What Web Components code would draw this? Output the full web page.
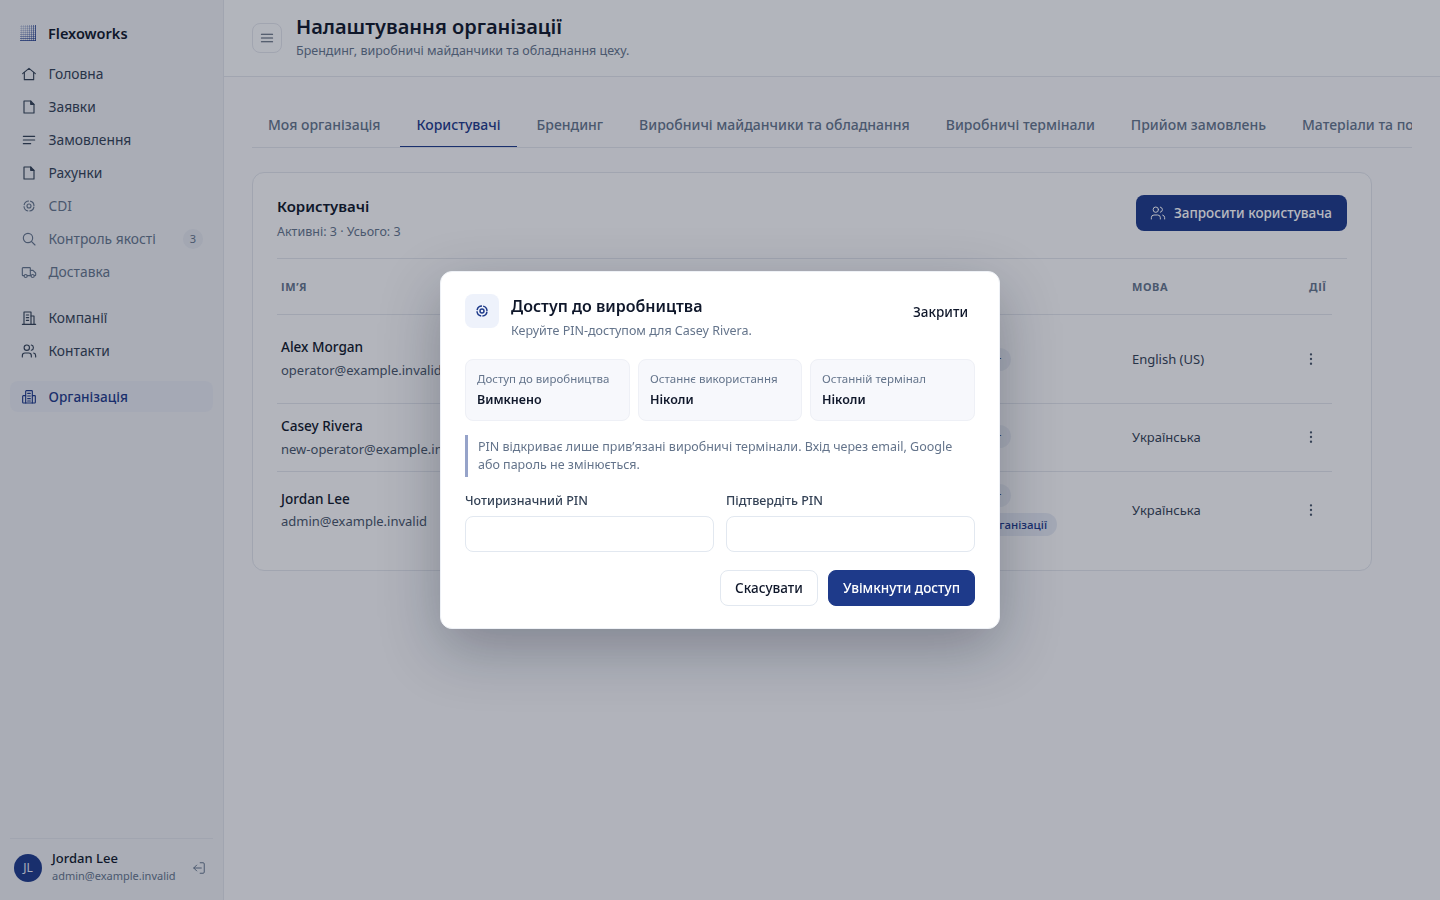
<!DOCTYPE html>
<html lang="uk">
<head>
<meta charset="utf-8">
<title>Налаштування організації</title>
<style>
  html, body { margin: 0; height: 100%; }
  body { font-family: "Noto Sans", "Liberation Sans", sans-serif; color: #0f172a; background: #f6f7fa; overflow: hidden; }
</style>
</head>
<body>
<app-shell>
  <app-sidebar slot="sidebar">
    <nav-item icon="house" tone="strong">Головна</nav-item>
    <nav-item icon="file" tone="strong">Заявки</nav-item>
    <nav-item icon="lines" tone="strong">Замовлення</nav-item>
    <nav-item icon="file" tone="strong">Рахунки</nav-item>
    <nav-item icon="target">CDI</nav-item>
    <nav-item icon="search" badge="3">Контроль якості</nav-item>
    <nav-item icon="truck">Доставка</nav-item>
    <nav-item icon="building" tone="strong" group>Компанії</nav-item>
    <nav-item icon="users" tone="strong">Контакти</nav-item>
    <nav-item icon="org" active group>Організація</nav-item>
  </app-sidebar>

  <page-header title="Налаштування організації" subtitle="Брендинг, виробничі майданчики та обладнання цеху."></page-header>

  <org-tabs>
    <tab-item>Моя організація</tab-item>
    <tab-item active>Користувачі</tab-item>
    <tab-item>Брендинг</tab-item>
    <tab-item>Виробничі майданчики та обладнання</tab-item>
    <tab-item>Виробничі термінали</tab-item>
    <tab-item>Прийом замовлень</tab-item>
    <tab-item>Матеріали та по</tab-item>
  </org-tabs>

  <users-card>
    <user-row name="Alex Morgan" email="operator@example.invalid" lang="English (US)" height="89" style="--id-lift: 2px"></user-row>
    <user-row name="Casey Rivera" email="new-operator@example.invalid" lang="Українська" height="68" style="--cell-lift: 2px"></user-row>
    <user-row name="Jordan Lee" email="admin@example.invalid" lang="Українська" height="77" style="--cell-lift: 2px; --id-lift: 2px; --mail-gap: 0px" owner last></user-row>
  </users-card>
</app-shell>

<pin-dialog>
  <stat-tile label="Доступ до виробництва">Вимкнено</stat-tile>
  <stat-tile label="Останнє використання">Ніколи</stat-tile>
  <stat-tile label="Останній термінал">Ніколи</stat-tile>
</pin-dialog>

<script>
const ICONS = {
  house: '<path d="M2.500 11.500 12 3.500l9.500 8"/><path d="M5 9.500V20.500h14V9.500"/>',
  file: '<path d="M4.500 3h10l5 5v13h-15z"/><path d="M14.500 3v5h5" /><path d="M15.500 4.500v2.500h2.500" />',
  lines: '<path d="M3.500 6.500h17"/><path d="M3.500 12h17"/><path d="M3.500 17.500h11"/>',
  target: '<circle cx="12" cy="12" r="7.500" stroke-linecap="butt" stroke-dasharray="9.980 1.800" stroke-dashoffset="-0.900"/><circle cx="12" cy="12" r="3"/>',
  search: '<circle cx="10.500" cy="10.500" r="7"/><path d="m21 21-5.500-5.500"/>',
  truck: '<path d="M14 17.500V6.500a1 1 0 0 0-1-1H3a1 1 0 0 0-1 1v10a1 1 0 0 0 1 1h1.500"/><path d="M9.500 17.500H14"/><path d="M14 9.500h4l4 4v3a1 1 0 0 1-1 1h-1"/><circle cx="7" cy="18" r="2.300"/><circle cx="17.500" cy="18" r="2.300"/>',
  building: '<path d="M2 21.500h20"/><path d="M4.500 21.500V3h10.500v18.500"/><path d="M15 9h4.500v12.500"/><path d="M8 7.500h3.500M8 11.500h3.500M8 15.500h3.500"/>',
  users: '<path d="M15.500 21v-2a4 4 0 0 0-4-4h-5.500a4 4 0 0 0-4 4v2"/><circle cx="8.700" cy="7" r="4"/><path d="M22 21v-2a4 4 0 0 0-3-3.900"/><path d="M15.500 3.100a4 4 0 0 1 0 7.800"/>',
  org: '<path d="M7 21V3.500a1 1 0 0 1 1-1h8a1 1 0 0 1 1 1V21"/><path d="M7 10H3.500a1 1 0 0 0-1 1v9a1 1 0 0 0 1 1h17a1 1 0 0 0 1-1v-9a1 1 0 0 0-1-1H17"/><path d="M10 6.500h4M10 10.500h4M10 14.500h4M10 18h4"/>',
  menu: '<path d="M4.500 7h15"/><path d="M4.500 12h15"/><path d="M4.500 17h15"/>',
  kebab: '<circle cx="12" cy="5" r=".9"/><circle cx="12" cy="12" r=".9"/><circle cx="12" cy="19" r=".9"/>',
  logout: '<path d="M14 3h5a2 2 0 0 1 2 2v14a2 2 0 0 1-2 2h-5"/><path d="M16 12H3"/><path d="m8 7-5 5 5 5"/>'
};

function icon(name, size, width) {
  return `<svg width="${size}" height="${size}" viewBox="0 0 24 24" fill="none" stroke="currentColor" stroke-width="${width || 1.7}" stroke-linecap="round" stroke-linejoin="round" aria-hidden="true">${ICONS[name]}</svg>`;
}

// plaid mark: 1px stripes that get darker towards the right and the bottom
function logoStripes() {
  let out = '';
  for (let i = 0; i < 8; i++) {
    const a = (0.14 + 0.62 * Math.pow(i / 7, 2.2)).toFixed(2);
    out += `<rect x="${i * 2 + 1}" y="0" width="1" height="16" fill="#1e3a8a" opacity="${a}"/>`;
    out += `<rect x="0" y="${i * 2 + 1}" width="16" height="1" fill="#1e3a8a" opacity="${a}"/>`;
  }
  return out;
}

class AppShell extends HTMLElement {
  constructor() {
    super();
    this.attachShadow({ mode: 'open' });
    this.shadowRoot.innerHTML = `
      <style>
        :host { display: grid; grid-template-columns: 224px 1fr; height: 100vh; }
        main { min-width: 0; display: flex; flex-direction: column; }
        .content { padding: 24px 28px; display: flex; flex-direction: column; gap: 24px; min-width: 0; }
      </style>
      <slot name="sidebar"></slot>
      <main>
        <slot name="header"></slot>
        <div class="content"><slot></slot></div>
      </main>
    `;
  }
  connectedCallback() {
    const header = this.querySelector('page-header');
    if (header) header.slot = 'header';
  }
}

class AppSidebar extends HTMLElement {
  constructor() {
    super();
    this.attachShadow({ mode: 'open' });
    this.shadowRoot.innerHTML = `
      <style>
        :host { display: flex; flex-direction: column; box-sizing: border-box; height: 100vh; background: #eceef3; border-right: 1px solid #e0e3ea; padding: 0 10px; }
        .brand { display: flex; align-items: center; gap: 12px; height: 33px; margin: 16px 0 9px; padding-left: 10px; font-size: 14.500px; font-weight: 600; color: #0f172a; }
        .brand svg { display: block; }
        nav { display: flex; flex-direction: column; gap: 2px; flex: 1; }
        .user { display: flex; align-items: center; box-sizing: border-box; border-top: 1px solid #e0e3ea; height: 62px; padding: 0 0 4px 4px; }
        .avatar { width: 28px; height: 28px; border-radius: 50%; background: #1e3a8a; color: #e8ecf6; font-size: 12px; display: flex; align-items: center; justify-content: center; flex: none; }
        .who { margin: 0 0 2px 10px; flex: 1; min-width: 0; }
        .name { font-size: 13px; font-weight: 500; line-height: 18px; color: #0f172a; }
        .mail { font-size: 11px; line-height: 18px; color: #64748b; }
        .out { color: #64748b; margin-right: 7px; display: flex; }
      </style>
      <div class="brand"><svg width="16" height="16" viewBox="0 0 16 16" aria-hidden="true">${logoStripes()}</svg>Flexoworks</div>
      <nav><slot></slot></nav>
      <div class="user">
        <div class="avatar">JL</div>
        <div class="who"><div class="name">Jordan Lee</div><div class="mail">admin@example.invalid</div></div>
        <span class="out">${icon('logout', 14)}</span>
      </div>
    `;
  }
}

class NavItem extends HTMLElement {
  constructor() {
    super();
    this.attachShadow({ mode: 'open' });
  }
  connectedCallback() {
    const badge = this.getAttribute('badge');
    this.shadowRoot.innerHTML = `
      <style>
        :host { display: flex; align-items: center; height: 31px; padding: 0 10px 0 11px; border-radius: 8px; font-size: 13.800px; color: #64748b; }
        :host([tone="strong"]) { color: #334155; }
        :host([active]) { color: #1e3a8a; background: #e6e9f1; font-size: 13.600px; font-weight: 500; }
        :host([group]) { margin-top: 13px; }
        .ic { width: 16px; height: 16px; margin-right: 11.500px; flex: none; display: flex; }
        .label { flex: 1; white-space: nowrap; }
        .badge { width: 20px; height: 20px; border-radius: 50%; background: #e2e5ec; color: #64748b; font-size: 11px; display: flex; align-items: center; justify-content: center; }
      </style>
      <span class="ic">${icon(this.getAttribute('icon'), 16)}</span>
      <span class="label"><slot></slot></span>
      ${badge ? `<span class="badge">${badge}</span>` : ''}
    `;
  }
}

class PageHeader extends HTMLElement {
  constructor() {
    super();
    this.attachShadow({ mode: 'open' });
  }
  connectedCallback() {
    this.shadowRoot.innerHTML = `
      <style>
        :host { display: flex; align-items: center; gap: 14px; box-sizing: border-box; height: 77px; padding: 0 28px; border-bottom: 1px solid #e0e3ea; background: #f8f9fb; }
        button { width: 30px; height: 30px; padding: 0; border: 1px solid #e0e3ea; border-radius: 8px; background: #f8f9fb; color: #475569; display: flex; align-items: center; justify-content: center; }
        .text { padding-bottom: 4px; }
        h1 { margin: 0; font-size: 20px; line-height: 28px; font-weight: 600; color: #0f172a; }
        p { margin: 1px 0 0; font-size: 12.500px; line-height: 18px; color: #64748b; }
      </style>
      <button type="button" aria-label="Меню">${icon('menu', 18, 1.400)}</button>
      <div class="text"><h1>${this.getAttribute('title')}</h1><p>${this.getAttribute('subtitle')}</p></div>
    `;
  }
}

class OrgTabs extends HTMLElement {
  constructor() {
    super();
    this.attachShadow({ mode: 'open' });
    this.shadowRoot.innerHTML = `
      <style>
        :host { display: flex; gap: 4px; height: 46px; border-bottom: 1px solid #e0e3ea; overflow: hidden; }
      </style>
      <slot></slot>
    `;
  }
}

class TabItem extends HTMLElement {
  constructor() {
    super();
    this.attachShadow({ mode: 'open' });
    this.shadowRoot.innerHTML = `
      <style>
        :host { display: flex; align-items: center; flex: none; box-sizing: border-box; height: 46px; padding: 2px 16px 0; border-bottom: 1px solid transparent; font-size: 14px; font-weight: 500; color: #64748b; white-space: nowrap; }
        :host([active]) { color: #1e3a8a; border-bottom-color: #1e3a8a; }
      </style>
      <slot></slot>
    `;
  }
}

class UsersCard extends HTMLElement {
  constructor() {
    super();
    this.attachShadow({ mode: 'open' });
    this.shadowRoot.innerHTML = `
      <style>
        :host { display: block; box-sizing: border-box; width: 1120px; padding: 22px 24px 21px; background: #f9f9fb; border: 1px solid #e0e3ea; border-radius: 12px; }
        .top { display: flex; justify-content: space-between; align-items: flex-start; height: 63px; border-bottom: 1px solid #e0e3ea; }
        h2 { margin: 0; font-size: 15px; line-height: 22px; font-weight: 600; color: #0f172a; }
        p { margin: 5px 0 0; font-size: 12.500px; line-height: 20px; color: #64748b; }
        button { display: flex; align-items: center; gap: 8px; height: 36px; padding: 0 15px 0 14px; border: 0; border-radius: 8px; background: #1e3a8a; color: #fff; font: 500 13.500px "Noto Sans", sans-serif; }
        .table { width: 1055px; }
        .head { display: grid; grid-template-columns: 600px 251px 177px 27px; align-items: center; height: 55px; border-bottom: 1px solid #e0e3ea; font-size: 11px; font-weight: 700; letter-spacing: .6px; color: #64748b; text-transform: uppercase; }
        .head span { padding-left: 4px; white-space: nowrap; }
      </style>
      <div class="top">
        <div><h2>Користувачі</h2><p>Активні: 3 · Усього: 3</p></div>
        <button type="button">${icon('users', 16, 1.500)}Запросити користувача</button>
      </div>
      <div class="table">
        <div class="head"><span>Ім’я</span><span></span><span>Мова</span><span>Дії</span></div>
        <slot></slot>
      </div>
    `;
  }
}

class UserRow extends HTMLElement {
  constructor() {
    super();
    this.attachShadow({ mode: 'open' });
  }
  connectedCallback() {
    const owner = this.hasAttribute('owner');
    this.shadowRoot.innerHTML = `
      <style>
        :host { display: grid; grid-template-columns: 600px 251px 177px 27px; align-items: center; box-sizing: border-box; height: ${this.getAttribute('height')}px; border-bottom: 1px solid #e0e3ea; }
        :host([last]) { border-bottom: 0; }
        .cell { padding-left: 4px; min-width: 0; }
        .id { margin-bottom: var(--id-lift, 0px); }
        .name { font-size: 13.600px; line-height: 22px; font-weight: 500; color: #0f172a; margin-bottom: var(--mail-gap, 1px); }
        .mail { font-size: 13px; line-height: 22px; color: #475569; }
        .roles { display: flex; flex-direction: column; align-items: flex-start; gap: 6px; margin-bottom: var(--cell-lift, 0px); }
        .pill { box-sizing: border-box; height: 23px; line-height: 23px; border-radius: 12px; background: #e8ebf2; font-size: 11px; font-weight: 500; color: #334155; text-align: right; padding-right: 10px; white-space: nowrap; overflow: hidden; }
        .pill.a { width: 130px; }
        .pill.b { width: 176px; font-size: 11.500px; color: #1e3a8a; background: #e4e8f2; }
        .lang { font-size: 13px; color: #334155; margin-bottom: var(--cell-lift, 0px); }
        .more { display: flex; margin-left: -2px; margin-bottom: var(--cell-lift, 0px); padding: 0; color: #475569; }
      </style>
      <div class="cell id"><div class="name">${this.getAttribute('name')}</div><div class="mail">${this.getAttribute('email')}</div></div>
      <div class="cell roles"><span class="pill a">Менеджмент</span>${owner ? '<span class="pill b">Власник організації</span>' : ''}</div>
      <div class="cell lang">${this.getAttribute('lang')}</div>
      <div class="cell more">${icon('kebab', 16)}</div>
    `;
  }
}

class StatTile extends HTMLElement {
  constructor() {
    super();
    this.attachShadow({ mode: 'open' });
  }
  connectedCallback() {
    this.shadowRoot.innerHTML = `
      <style>
        :host { display: block; box-sizing: border-box; height: 62px; padding: 10px 11px; background: #f7f8fc; border: 1px solid #eef0f6; border-radius: 8px; }
        .label { font-size: 11.500px; line-height: 18px; color: #64748b; white-space: nowrap; }
        .value { font-size: 12.500px; line-height: 20px; margin-top: 2px; font-weight: 600; color: #0f172a; }
      </style>
      <div class="label">${this.getAttribute('label')}</div>
      <div class="value"><slot></slot></div>
    `;
  }
}

class PinDialog extends HTMLElement {
  constructor() {
    super();
    this.attachShadow({ mode: 'open' });
    this.shadowRoot.innerHTML = `
      <style>
        :host { position: fixed; inset: 0; display: flex; align-items: center; justify-content: center; background: rgba(15, 23, 42, .3); }
        .box { box-sizing: border-box; width: 560px; height: 358px; padding: 22px 24px 21px; background: #fff; border: 1px solid #eef1f6; border-radius: 12px; box-shadow: 0 20px 60px rgba(15, 23, 42, .3); }
        .head { display: flex; align-items: flex-start; height: 65px; }
        .badge { width: 34px; height: 34px; border-radius: 8px; background: #eef2fb; color: #1e3a8a; display: flex; align-items: center; justify-content: center; flex: none; margin-right: 12px; }
        .titles { flex: 1; }
        h2 { margin: 0; font-size: 16px; line-height: 24px; font-weight: 600; color: #0f172a; }
        .sub { margin: 4px 0 0; font-size: 12.500px; line-height: 18px; color: #64748b; }
        .close { border: 0; background: none; height: 36px; padding: 0 7px; font: 500 13.500px "Noto Sans", sans-serif; color: #0f172a; }
        .tiles { display: grid; grid-template-columns: 165px 164px 165px; gap: 8px; }
        .note { margin-top: 14px; border-left: 3px solid #96a3c9; padding: 3px 16px 3px 10px; font-size: 12.500px; line-height: 18px; color: #64748b; }
        .fields { display: grid; grid-template-columns: 1fr 1fr; gap: 12px; margin-top: 14px; }
        label { display: block; font-size: 12.500px; line-height: 20px; font-weight: 500; color: #334155; }
        input { display: block; box-sizing: border-box; width: 100%; height: 36px; margin-top: 5px; border: 1px solid #e2e8f0; border-radius: 8px; background: #fff; outline: 0; }
        .actions { display: flex; justify-content: flex-end; gap: 10px; margin-top: 18px; }
        .actions button { height: 36px; border-radius: 8px; padding: 0 14px; font: 500 13.500px "Noto Sans", sans-serif; }
        .ghost { background: #fff; border: 1px solid #e2e8f0; color: #0f172a; }
        .primary { background: #1e3a8a; border: 1px solid #1e3a8a; color: #fff; }
      </style>
      <div class="box" role="dialog" aria-modal="true">
        <div class="head">
          <div class="badge">${icon('target', 16, 2.200)}</div>
          <div class="titles"><h2>Доступ до виробництва</h2><p class="sub">Керуйте PIN-доступом для Casey Rivera.</p></div>
          <button class="close" type="button">Закрити</button>
        </div>
        <div class="tiles"><slot></slot></div>
        <div class="note">PIN відкриває лише прив’язані виробничі термінали. Вхід через email, Google або пароль не змінюється.</div>
        <div class="fields">
          <label>Чотиризначний PIN<input type="password" inputmode="numeric"></label>
          <label>Підтвердіть PIN<input type="password" inputmode="numeric"></label>
        </div>
        <div class="actions">
          <button class="ghost" type="button">Скасувати</button>
          <button class="primary" type="button">Увімкнути доступ</button>
        </div>
      </div>
    `;
  }
}

customElements.define('app-shell', AppShell);
customElements.define('app-sidebar', AppSidebar);
customElements.define('nav-item', NavItem);
customElements.define('page-header', PageHeader);
customElements.define('org-tabs', OrgTabs);
customElements.define('tab-item', TabItem);
customElements.define('users-card', UsersCard);
customElements.define('user-row', UserRow);
customElements.define('stat-tile', StatTile);
customElements.define('pin-dialog', PinDialog);
</script>
</body>
</html>
